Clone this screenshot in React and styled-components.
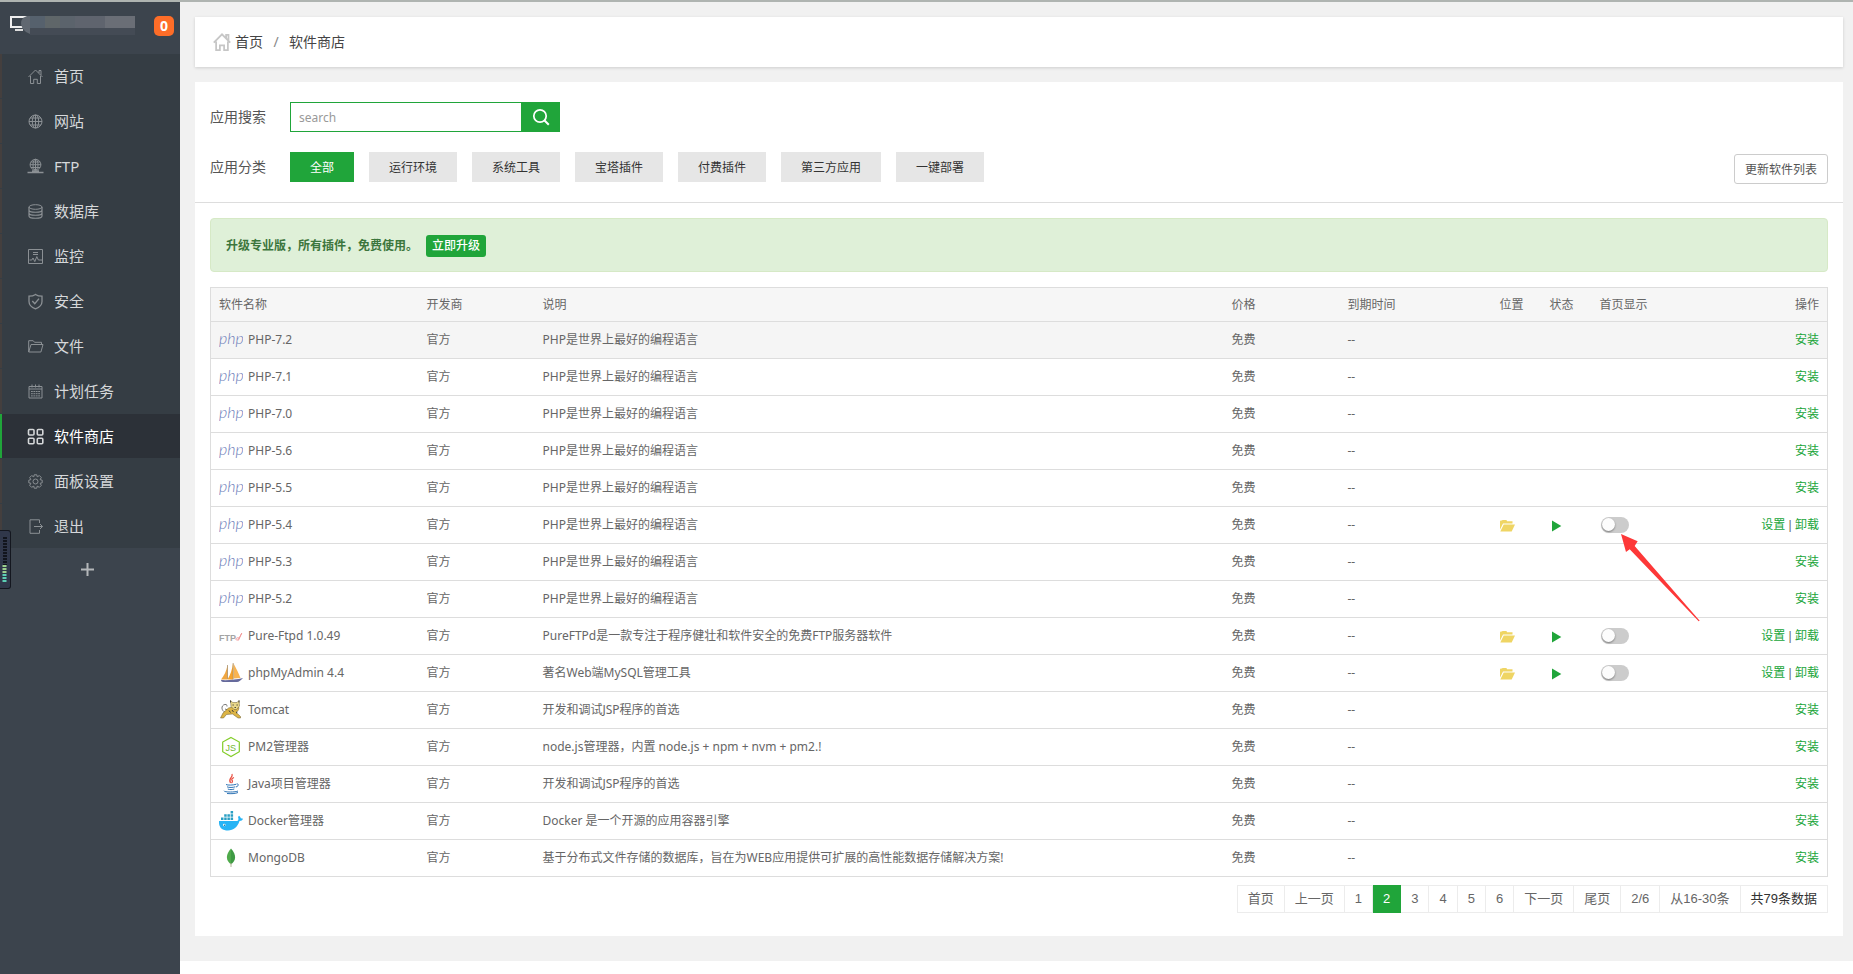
import React, { useState } from "react";
import styled, { createGlobalStyle } from "styled-components";

const GREEN = "#20a53a";

const GlobalStyle = createGlobalStyle`
  *, *::before, *::after { box-sizing: border-box; }
  body {
    margin: 0;
    background: #fff;
    color: #555;
    font: 12px/18px "Noto Sans", "Noto Sans CJK SC", sans-serif;
  }
  a { color: inherit; text-decoration: none; }
  button, input { font: inherit; }
`;

const Shell = styled.div`
  display: flex;
  min-height: 100vh;
  border-top: 2px solid #afb4b1;
`;

/* ---------- sidebar ---------- */

const Sidebar = styled.aside`
  flex: 0 0 180px;
  background: #3c444d;
`;

const ServerBar = styled.div`
  display: flex;
  align-items: center;
  height: 52px;
  padding: 0 6px 4px 9px;
`;

const ServerMark = styled.svg`
  display: block;
  width: 128px;
  height: 22px;
`;

const Badge = styled.span`
  width: 20px;
  height: 20px;
  margin-left: auto;
  border-radius: 5px;
  background: #fe6d28;
  color: #fff;
  font: bold 14px/20px "Open Sans", sans-serif;
  text-align: center;
`;

const Menu = styled.ul`
  margin: 0;
  padding: 0;
  list-style: none;
  background: #353d44;
`;

const MenuItem = styled.li`
  border-bottom: 1px solid #353d44;
  &:last-child { border-bottom: 0; }
`;

const MenuLink = styled.a`
  display: flex;
  align-items: center;
  gap: 10px;
  height: 44px;
  padding-left: 25px;
  border-left: 2px solid ${(p) => (p.$active ? GREEN : "#443f3e")};
  background: ${(p) => (p.$active ? "#2c3138" : "transparent")};
  color: ${(p) => (p.$active ? "#fff" : "#d6d8da")};
  font-size: 15px;
  line-height: 22px;
`;

const MenuIcon = styled.svg`
  width: 17px;
  height: 17px;
  fill: none;
  stroke: ${(p) => (p.$active ? "#d4d6d8" : "#8b9094")};
  stroke-width: ${(p) => (p.$active ? 1.6 : 1)};
`;

const AddButton = styled.button`
  display: flex;
  align-items: center;
  justify-content: center;
  width: 100%;
  height: 42px;
  padding: 0 5px 0 0;
  border: 0;
  background: none;
  color: #b4b7ba;
`;

const MeterWidget = styled.div`
  position: fixed;
  left: 0;
  top: 530px;
  width: 11px;
  height: 59px;
  padding: 6px 3px 6px 2px;
  border: 1px solid #14171f;
  border-left: 0;
  border-radius: 0 3px 3px 0;
  background: #30374a;
`;

const MeterBars = styled.svg`
  display: block;
  width: 5px;
  height: 46px;
`;

/* ---------- page ---------- */

const Main = styled.main`
  flex: 1;
  min-width: 0;
`;

const Content = styled.div`
  padding: 15px 10px 25px 15px;
  background: #f1f1f1;
`;

const Breadcrumb = styled.nav`
  display: flex;
  align-items: center;
  height: 50px;
  margin-bottom: 15px;
  padding: 0 17px;
  background: #fff;
  box-shadow: 0 1px 3px rgba(0, 0, 0, 0.15);
  color: #444;
  font-size: 14px;
`;

const HomeIcon = styled.svg`
  width: 20px;
  height: 20px;
  margin-right: 3px;
  fill: none;
  stroke: #c6c6c6;
  stroke-width: 1.5;
`;

const Slash = styled.span`
  width: 26px;
  color: #888;
  text-align: center;
`;

const Card = styled.section`
  padding-bottom: 23px;
  background: #fff;
`;

const Filters = styled.div`
  display: flex;
  flex-direction: column;
  gap: 20px;
  padding: 20px 15px;
  border-bottom: 1px solid #ddd;
`;

const FilterRow = styled.div`
  display: flex;
  align-items: center;
  height: 30px;
`;

const FilterLabel = styled.label`
  width: 80px;
  color: #555;
  font-size: 14px;
`;

const SearchInput = styled.input`
  width: 232px;
  height: 30px;
  padding: 0 8px;
  border: 1px solid ${GREEN};
  outline: 0;
  color: #555;
  &::placeholder { color: #999; opacity: 1; }
`;

const SearchButton = styled.button`
  display: flex;
  align-items: center;
  justify-content: center;
  width: 38px;
  height: 30px;
  padding: 0;
  border: 0;
  background: ${GREEN};
`;

const Categories = styled.div`
  display: flex;
  gap: 15px;
`;

const Category = styled.button`
  height: 30px;
  padding: 2px 20px 0;
  border: 0;
  background: ${(p) => (p.$active ? GREEN : "#e6e6e6")};
  color: ${(p) => (p.$active ? "#fff" : "#333")};
`;

const RefreshButton = styled.button`
  height: 30px;
  margin: 4px 0 0 auto;
  padding: 2px 10px 0;
  border: 1px solid #ccc;
  border-radius: 3px;
  background: #fff;
  color: #555;
`;

const Body = styled.div`
  padding: 15px 15px 0;
`;

const Notice = styled.div`
  display: flex;
  align-items: center;
  height: 54px;
  margin-bottom: 15px;
  padding: 2px 15px 0;
  border: 1px solid #d6e9c6;
  border-radius: 4px;
  background: #dff0d8;
  color: #3c763d;
  font-weight: bold;
`;

const UpgradeLink = styled.a`
  margin-left: 8px;
  padding: 2px 6px;
  border-radius: 3px;
  background: ${GREEN};
  color: #fff;
  font-weight: 500;
`;

const Table = styled.table`
  width: 100%;
  border: 1px solid #ddd;
  border-collapse: collapse;
  table-layout: fixed;
  color: #666;
`;

const Col = styled.col`
  width: ${(p) => p.$w};
`;

const Th = styled.th`
  height: 34px;
  padding: 0 8px;
  background: #f6f6f6;
  font-weight: normal;
  text-align: ${(p) => (p.$end ? "right" : "left")};
`;

const Row = styled.tr`
  border-top: 1px solid #ddd;
  background: ${(p) => (p.$hover ? "#f5f5f5" : "#fff")};
`;

const Td = styled.td`
  height: 37px;
  padding: 0 8px;
  white-space: nowrap;
`;

const ActionTd = styled(Td)`
  font-family: "Liberation Sans", "Noto Sans CJK SC", sans-serif;
  text-align: right;
`;

const AppName = styled.span`
  display: flex;
  align-items: center;
  gap: 5px;
`;

const Logo = styled.svg`
  flex: none;
  width: 24px;
  height: 22px;
`;

const IconLink = styled.a`
  display: flex;
  padding-top: 2px;
`;

const ActionLink = styled.a`
  color: ${GREEN};
`;

const ToggleBox = styled.span`
  position: relative;
  display: flex;
  width: 28px;
  margin: 0 0 1px 1px;
`;

const Toggle = styled.input`
  appearance: none;
  display: flex;
  align-items: center;
  width: 28px;
  height: 16px;
  margin: 0;
  padding: 1px;
  border-radius: 8px;
  background: #ccc;
  cursor: pointer;
  &::before {
    content: "";
    width: 13px;
    height: 13px;
    border-radius: 50%;
    background: #fcfcfc;
    box-shadow: 0 1px 2px rgba(0, 0, 0, 0.4);
  }
  &:checked { background: ${GREEN}; justify-content: flex-end; }
`;

const Arrow = styled.svg`
  position: absolute;
  left: 20px;
  top: 17px;
  width: 80px;
  height: 88px;
  pointer-events: none;
`;

const Pager = styled.nav`
  display: flex;
  width: fit-content;
  margin: 8px 0 0 auto;
  border-left: 1px solid #ececec;
  color: #666;
  font: 13px/26px "Liberation Sans", "Noto Sans CJK SC", sans-serif;
`;

const pagerCell = `
  height: 28px;
  padding: 0 10px;
  border: 1px solid #ececec;
  border-left: 0;
`;

const PageLink = styled.a`
  ${pagerCell}
  ${(p) => p.$active && `background: ${GREEN}; border-color: ${GREEN}; color: #fff;`}
`;

const PageInfo = styled.span`
  ${pagerCell}
  color: ${(p) => (p.$dark ? "#333" : "inherit")};
`;

/* ---------- drawings ---------- */

const housePath = (
  <path d="M1.5 9 8.5 2l7 7M12 5V2.5h2V7M3.5 8v7.5h3.2v-4.2h3.6v4.2h3.2V8" />
);

const menuIcons = {
  home: housePath,
  site: (
    <>
      <circle cx="8.5" cy="8.5" r="6.5" />
      <ellipse cx="8.5" cy="8.5" rx="3.2" ry="6.5" />
      <path d="M8.5 2v13M2 8.5h13M3 5h11M3 12h11" />
    </>
  ),
  ftp: (
    <>
      <circle cx="8.5" cy="6.7" r="5.4" />
      <ellipse cx="8.5" cy="6.7" rx="2.5" ry="5.4" />
      <path d="M8.5 1.3v11M3 6.7h11M4 4h9M4 9.5h9" />
      <path d="M.5 14.5h16M5 13h7" strokeWidth="1.6" />
    </>
  ),
  db: (
    <>
      <ellipse cx="8.5" cy="4" rx="6.5" ry="2.3" />
      <path d="M2 4v9c0 3 13 3 13 0V4M2 7c0 3 13 3 13 0M2 10c0 3 13 3 13 0" strokeWidth="1.2" />
    </>
  ),
  monitor: (
    <>
      <path d="M1.500 1.500h14v14h-14zM6 4.500h5M6 6.500h5" />
      <path d="M2.500 12h2.300l1.200-2 1.800 3.600 2-5 1.600 3.400H15" />
    </>
  ),
  shield: (
    <>
      <path d="M2 3.200C5 3.200 7 2.500 8.500 1.400 10 2.500 12 3.200 15 3.200v5.300c0 3.500-3 6-6.500 7.400C5 14.500 2 12 2 8.500z" strokeWidth="1.300" />
      <path d="m5.300 8 2.500 2.700L12 5.600" strokeWidth="1.400" />
    </>
  ),
  folder: (
    <path d="M1.700 14V2.700h4.500l1.300 1.600h7V6.500M1.700 14 4 6.500h12L13.900 14z" />
  ),
  calendar: (
    <>
      <path d="M2 3.500h13V15H2zM2 6h13M5 1.500v3M12 1.500v3M8.500 1.500v3" />
      <path d="M4 8.500h9M4 10.700h9M4 12.900h9" strokeDasharray="1.800 .6" />
    </>
  ),
  store: (
    <>
      <rect x="1.500" y="1.500" width="5.500" height="5.500" rx="1" />
      <rect x="10.300" y="1.500" width="5.500" height="5.500" rx="1" />
      <rect x="1.500" y="10.300" width="5.500" height="5.500" rx="1" />
      <rect x="10.300" y="10.300" width="5.500" height="5.500" rx="1" />
    </>
  ),
  gear: (
    <>
      <circle cx="8.500" cy="8.500" r="2.500" />
      <path d="M7.200 1.800h2.600l.4 2 2.200-1.200 1.900 1.900-1.200 2.100 2.100.6v2.600l-2.100.5 1.200 2.100-1.900 1.900-2.200-1.200-.4 2.100H7.200l-.4-2.100-2.200 1.200-1.900-1.900 1.200-2.100-2.100-.5V7.200l2.100-.6-1.200-2.100 1.900-1.900 2.200 1.200z" />
    </>
  ),
  exit: <path d="M12.500 5V1.800H3v13.500h9.500V12M7 8.500h8.500M13 6l2.500 2.500L13 11" />,
};

const logos = {
  php: (
    <text x="0" y="15" fontFamily="Lato, sans-serif" fontStyle="italic" fontWeight="300" fontSize="16" fill="#6c7cb8">
      php
    </text>
  ),
  ftp: (
    <>
      <text x="0" y="16" fontFamily="Liberation Sans, sans-serif" fontWeight="bold" fontSize="9" fill="#a4a4a4">
        FTP
      </text>
      <path d="M20 13c-2-.8-3.300.5-3 1.500.4 1.200 2.200.5 2.700-.5L22.800 8l-3.400 7.500" fill="none" stroke="#f29a9a" />
    </>
  ),
  pma: (
    <>
      <path d="M8.500 3v14.500H2C5 14 7.500 9 8.500 3z" fill="#f0a640" />
      <path d="M14 1v16.500H8.500C11.500 13 13.300 7 14 1z" fill="#f6a32c" />
      <path d="M14.500 1.500C17 6 19.500 11 21.500 16l-7 .5z" fill="#f8b452" />
      <path d="M8.500 3v14M14.200 1v16" stroke="#9d8560" strokeWidth=".7" />
      <path d="M2 18c6 .5 15-.2 22-2-2 2-4 4-6 4H4c-1 0-2-.8-2-2z" fill="#666a9c" />
    </>
  ),
  tomcat: (
    <>
      <path d="M8 14c-5-1-6.500-6-3.500-8C6.500 4.800 8.500 5.500 8 7.500M6 10l3 1" fill="none" stroke="#555" strokeWidth=".8" />
      <path d="M20 8.500c0 2.500-1.500 3.800-3 4.800l4.500 4.200v1.500h-2.500l-5.500-4-6 .5-3 3.500H1.500l2.500-5L9.500 9l4-1z" fill="#dcb445" stroke="#6b5b2c" strokeWidth=".5" />
      <path d="m11.500 1.500 2.300 2h4.200l2-2 .5 5.500-3 3.500h-2.500l-3-3z" fill="#ead889" stroke="#6b5b2c" strokeWidth=".5" />
      <path d="M13.500 6h1.300M17.500 6h1.300M15.500 8.500h1.500M10 11.500l1.500 2M13 11l1.500 2M17 14l1.500-1M11.500 1.500v2M20 1.500v2" stroke="#353535" strokeWidth=".9" />
    </>
  ),
  node: (
    <>
      <path d="M12 1.500 20.300 6v9.700L12 20.500l-8.300-4.800V6z" fill="none" stroke="#83cd29" strokeWidth="1.200" />
      <text x="6.500" y="14.500" fontFamily="Liberation Sans, sans-serif" fontSize="9" fill="#72b72e">
        JS
      </text>
    </>
  ),
  java: (
    <>
      <path d="M13 1c1.500 3.500-4.500 4.500-1.500 9M15 4.500c-3 1.200-2.500 2.500-1.500 3.500 0 1-.5 1.500-1 2" fill="none" stroke="#e84a3c" strokeWidth="1.200" />
      <path d="M7 11.500c1.500 1 8 .6 10-.2M8 13.800c2 1 6 .8 8.300 0M8.800 16c2 .9 4.500.7 6.500 0M17.500 11c2.500-.5 2.500 2-.5 3M5 17.800c0 1.700 12 1.500 14 .2M8 20.500c4 .4 8.500.2 11-1" fill="none" stroke="#2f74b5" />
    </>
  ),
  docker: (
    <>
      <path d="M0 11h18c1.500 0 1.800-2 1-4l1-1.300c1 .8 1.500 1.500 1.800 2.500 1 0 1.800.2 2.200.6-.5 1.500-1.700 2.200-3.500 2.200C18.500 17 14.500 20.500 9 20.500 3 20.500-.5 17 0 11z" fill="#27b4f5" />
      <path d="M2 7.500h2.500V10H2zM5.200 7.500h2.500V10H5.200zM8.400 7.500h2.500V10H8.400zM11.600 7.500h2.500V10h-2.500zM5.200 4.300h2.500v2.500H5.200zM8.400 4.300h2.500v2.500H8.400zM11.600 4.300h2.500v2.500h-2.500zM11.600 1.100h2.500v2.500h-2.500z" fill="#2a9fc4" />
      <circle cx="5.200" cy="15" r="1.300" fill="#fff" />
      <circle cx="5.400" cy="15.200" r=".7" fill="#1c6a8c" />
    </>
  ),
  mongo: (
    <>
      <path d="M12 1.500c-5.500 6.500-5.500 11.500 0 16z" fill="#4faa4b" />
      <path d="M12 1.500c5.500 6.500 5.500 11.500 0 16z" fill="#3f9a44" />
      <path d="M12 16v4" stroke="#b5b59a" />
    </>
  ),
};

/* ---------- data ---------- */

const menu = [
  ["home", "首页"],
  ["site", "网站"],
  ["ftp", "FTP"],
  ["db", "数据库"],
  ["monitor", "监控"],
  ["shield", "安全"],
  ["folder", "文件"],
  ["calendar", "计划任务"],
  ["store", "软件商店"],
  ["gear", "面板设置"],
  ["exit", "退出"],
];

const categories = ["全部", "运行环境", "系统工具", "宝塔插件", "付费插件", "第三方应用", "一键部署"];

const phpText = "PHP是世界上最好的编程语言";

const apps = [
  ...["7.2", "7.1", "7.0", "5.6", "5.5", "5.4", "5.3", "5.2"].map((v) => ({
    logo: "php",
    name: `PHP-${v}`,
    text: phpText,
    installed: v === "5.4",
    pointed: v === "5.4",
  })),
  { logo: "ftp", name: "Pure-Ftpd 1.0.49", text: "PureFTPd是一款专注于程序健壮和软件安全的免费FTP服务器软件", installed: true },
  { logo: "pma", name: "phpMyAdmin 4.4", text: "著名Web端MySQL管理工具", installed: true },
  { logo: "tomcat", name: "Tomcat", text: "开发和调试JSP程序的首选" },
  { logo: "node", name: "PM2管理器", text: "node.js管理器，内置 node.js + npm + nvm + pm2.!" },
  { logo: "java", name: "Java项目管理器", text: "开发和调试JSP程序的首选" },
  { logo: "docker", name: "Docker管理器", text: "Docker 是一个开源的应用容器引擎" },
  { logo: "mongo", name: "MongoDB", text: "基于分布式文件存储的数据库，旨在为WEB应用提供可扩展的高性能数据存储解决方案!" },
];

const columns = [
  ["软件名称", "208px"],
  ["开发商", "116px"],
  ["说明", "auto"],
  ["价格", "116px"],
  ["到期时间", "152px"],
  ["位置", "50px"],
  ["状态", "50px"],
  ["首页显示", "90px"],
  ["操作", "146px"],
];

const pages = ["首页", "上一页", "1", "2", "3", "4", "5", "6", "下一页", "尾页"];

function AppRow({ app, first }) {
  const [shown, setShown] = useState(false);
  return (
    <Row $hover={first}>
      <Td>
        <AppName>
          <Logo viewBox="0 0 24 22" aria-hidden="true">{logos[app.logo]}</Logo>
          {app.name}
        </AppName>
      </Td>
      <Td>官方</Td>
      <Td>{app.text}</Td>
      <Td>免费</Td>
      <Td>--</Td>
      <Td>
        {app.installed && (
          <IconLink href="#path" aria-label={`${app.name} 位置`}>
            <svg width="15" height="12" viewBox="0 0 15 12" fill="#efd564">
              <path d="M0 9.500V1.500C0 1 .4.600 1 .6h1L2.500 0h4L7 1.200h5.500V3.500H3L.8 8z" />
              <path d="M.3 11.500 3.700 4.500H15L11.700 11.500z" />
            </svg>
          </IconLink>
        )}
      </Td>
      <Td>
        {app.installed && (
          <IconLink href="#state" aria-label={`${app.name} 状态`}>
            <svg width="12" height="12" viewBox="0 0 12 12" fill={GREEN}>
              <path d="M2 .5 11.300 6 2 11.500z" />
            </svg>
          </IconLink>
        )}
      </Td>
      <Td>
        {app.installed && (
          <ToggleBox>
            <Toggle
              type="checkbox"
              aria-label={`${app.name} 首页显示`}
              checked={shown}
              onChange={(e) => setShown(e.target.checked)}
            />
            {app.pointed && (
              <Arrow viewBox="0 0 240 264" aria-hidden="true">
                <path d="M0 0 50 22 41 36 236 260 233 262 26 46 15 54z" fill="#fd3838" />
              </Arrow>
            )}
          </ToggleBox>
        )}
      </Td>
      <ActionTd>
        {app.installed ? (
          <>
            <ActionLink href="#setup">设置</ActionLink> | <ActionLink href="#remove">卸载</ActionLink>
          </>
        ) : (
          <ActionLink href="#install">安装</ActionLink>
        )}
      </ActionTd>
    </Row>
  );
}

export default function App() {
  const [query, setQuery] = useState("");
  return (
    <Shell>
      <GlobalStyle />
      <Sidebar>
        <ServerBar>
          <ServerMark viewBox="0 0 128 22" aria-hidden="true">
            <path d="M2 2h15v10H2z" fill="none" stroke="#eee" strokeWidth="2" />
            <path d="M6 15h8" stroke="#ddd" strokeWidth="2" />
            <path d="M21 1h-3q-6 2-6 7t5 9l4 2z" fill="#616871" />
            <path d="M21 1h15v12H21z" fill="#56616d" />
            <path d="M36 1h15v12H36z" fill="#5f6669" />
            <path d="M51 1h15v12H51z" fill="#5b636c" />
            <path d="M66 1h30v12H66z" fill="#5f646e" />
            <path d="M96 1h30v12H96z" fill="#6a6e76" />
            <path d="M21 13h105v7H21z" fill="#444b55" />
          </ServerMark>
          <Badge>0</Badge>
        </ServerBar>
        <Menu>
          {menu.map(([icon, label]) => {
            const active = icon === "store";
            return (
              <MenuItem key={icon}>
                <MenuLink href={`#${icon}`} $active={active} aria-current={active ? "page" : undefined}>
                  <MenuIcon viewBox="0 0 17 17" $active={active} aria-hidden="true">{menuIcons[icon]}</MenuIcon>
                  {label}
                </MenuLink>
              </MenuItem>
            );
          })}
        </Menu>
        <AddButton type="button" aria-label="添加">
          <svg width="13" height="13" viewBox="0 0 13 13" stroke="currentColor" strokeWidth="2">
            <path d="M6.500 0v13M0 6.500h13" />
          </svg>
        </AddButton>
      </Sidebar>

      <Main>
        <Content>
          <Breadcrumb>
            <HomeIcon viewBox="0 0 17 17" aria-hidden="true">{housePath}</HomeIcon>
            <a href="#home">首页</a>
            <Slash>/</Slash>
            <a href="#store">软件商店</a>
          </Breadcrumb>

          <Card>
            <Filters>
              <FilterRow>
                <FilterLabel htmlFor="search">应用搜索</FilterLabel>
                <SearchInput id="search" placeholder="search" value={query} onChange={(e) => setQuery(e.target.value)} />
                <SearchButton type="button" aria-label="搜索">
                  <svg width="18" height="18" viewBox="0 0 18 18" fill="none" stroke="#fff" strokeWidth="1.700">
                    <circle cx="8" cy="8" r="6.200" />
                    <path d="m12.300 12.300 4.500 4.500" strokeWidth="2" />
                  </svg>
                </SearchButton>
              </FilterRow>
              <FilterRow>
                <FilterLabel as="span">应用分类</FilterLabel>
                <Categories>
                  {categories.map((c, i) => (
                    <Category key={c} type="button" $active={i === 0}>{c}</Category>
                  ))}
                </Categories>
                <RefreshButton type="button">更新软件列表</RefreshButton>
              </FilterRow>
            </Filters>

            <Body>
              <Notice>
                升级专业版，所有插件，免费使用。
                <UpgradeLink href="#upgrade">立即升级</UpgradeLink>
              </Notice>

              <Table>
                <colgroup>
                  {columns.map(([label, width]) => <Col key={label} $w={width} />)}
                </colgroup>
                <thead>
                  <tr>
                    {columns.map(([label]) => (
                      <Th key={label} scope="col" $end={label === "操作"}>{label}</Th>
                    ))}
                  </tr>
                </thead>
                <tbody>
                  {apps.map((app, i) => <AppRow key={app.name} app={app} first={i === 0} />)}
                </tbody>
              </Table>

              <Pager aria-label="分页">
                {pages.map((p) => (
                  <PageLink key={p} href={`#${p}`} $active={p === "2"} aria-current={p === "2" ? "page" : undefined}>
                    {p}
                  </PageLink>
                ))}
                <PageInfo>2/6</PageInfo>
                <PageInfo>从16-30条</PageInfo>
                <PageInfo $dark>共79条数据</PageInfo>
              </Pager>
            </Body>
          </Card>
        </Content>
      </Main>

      <MeterWidget aria-hidden="true">
        <MeterBars viewBox="0 0 5 46">
          <path d="M3 0v28" stroke="#12151d" strokeWidth="4" strokeDasharray="2 1" />
          <path d="M2.500 28v9" stroke="#9bcf8e" strokeWidth="4" strokeDasharray="2 1" />
          <path d="M2.500 37v9" stroke="#5ccfb5" strokeWidth="4" strokeDasharray="2 1" />
        </MeterBars>
      </MeterWidget>
    </Shell>
  );
}
